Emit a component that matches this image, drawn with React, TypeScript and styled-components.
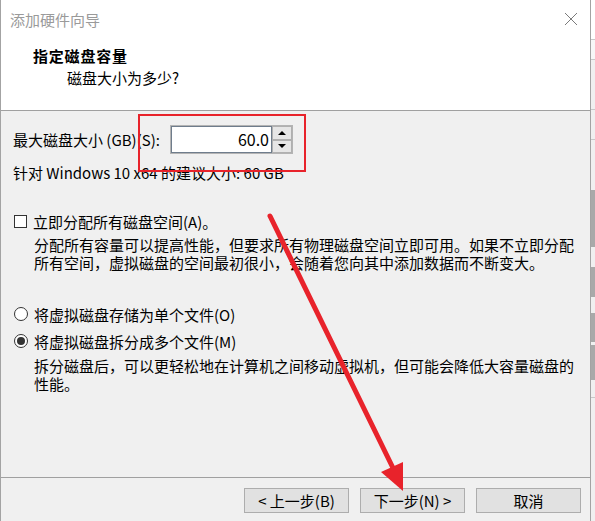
import React, { useState } from 'react';
import styled, { createGlobalStyle } from 'styled-components';

const GlobalStyle = createGlobalStyle`
    html, body {
        margin: 0;
        padding: 0;
        width: 595px;
        height: 521px;
        overflow: hidden;
        background: #f0f0f0;
    }
    * {
        box-sizing: border-box;
    }
`;

const FONT = `"Noto Sans CJK SC", "Noto Sans", sans-serif`;
const RED = '#e8232b';

const Page = styled.div`
    position: relative;
    display: flex;
    width: 595px;
    height: 521px;
    font-family: ${FONT};
    font-size: 15px;
    color: #000;
`;

const Dialog = styled.div`
    width: 591px;
    height: 521px;
    display: flex;
    flex-direction: column;
    border-left: 1px solid #a3a3a3;
    border-right: 1px solid #a3a3a3;
    background: #f0f0f0;
`;

const Header = styled.div`
    height: 111px;
    background: #fff;
    border-bottom: 1px solid #a0a0a0;
`;

const TitleBar = styled.div`
    height: 39px;
    display: flex;
    align-items: center;
    justify-content: space-between;
    padding: 0 12px 0 9px;
`;

const WindowTitle = styled.div`
    color: #9a9a9a;
    font-size: 15px;
    line-height: 20px;
`;

const CloseButton = styled.div`
    width: 14px;
    height: 14px;
    display: flex;
    align-items: center;
    justify-content: center;
    margin-top: -2px;
`;

const HeaderTitle = styled.div`
    margin: 6px 0 0 32px;
    font-weight: 700;
    letter-spacing: 0.8px;
    line-height: 22px;
`;

const HeaderSubtitle = styled.div`
    margin-left: 66px;
    line-height: 22px;
`;

const Body = styled.div`
    flex: 1;
    display: flex;
    flex-direction: column;
    padding: 14px 0 0 12px;
`;

const SizeRow = styled.div`
    display: flex;
    align-items: center;
    height: 29px;
`;

const SizeLabel = styled.div`
    width: 157px;
    line-height: 18px;
`;

const SpinBox = styled.div`
    display: flex;
    height: 29px;
    border: 1px solid #b4b4b4;
`;

const SpinInput = styled.div`
    width: 100px;
    background: #fff;
    border: 1px solid #6f7d8c;
    border-right-width: 0;
    text-align: right;
    padding-right: 2px;
    line-height: 25px;
    font-size: 16px;
`;

const SpinButtons = styled.div`
    display: flex;
    flex-direction: column;
    width: 21px;
    border-left: 1px solid #6f7d8c;
`;

const SpinButton = styled.div`
    flex: 1;
    display: flex;
    align-items: center;
    justify-content: center;
    background: #e6e6e6;
    border: 1px solid #b0b0b0;
`;

const Arrow = styled.div<{ $down?: boolean }>`
    width: 0;
    height: 0;
    border-left: 4px solid transparent;
    border-right: 4px solid transparent;
    ${({ $down }) => ($down ? 'border-top: 4px solid #000;' : 'border-bottom: 4px solid #000;')}
`;

const Line = styled.div<{ $top?: number }>`
    margin-top: ${({ $top }) => $top || 0}px;
    line-height: 18px;
`;

const OptionRow = styled.label<{ $top?: number }>`
    display: flex;
    align-items: center;
    gap: 6px;
    height: 18px;
    margin-top: ${({ $top }) => $top || 0}px;
    cursor: default;
`;

const CheckBox = styled.div`
    width: 13px;
    height: 13px;
    background: #fff;
    border: 1px solid #333;
    margin-left: 1px;
`;

const Radio = styled.div<{ $checked?: boolean }>`
    width: 14px;
    height: 14px;
    border-radius: 50%;
    background: #fff;
    border: 1px solid #333;
    display: flex;
    align-items: center;
    justify-content: center;
    margin-left: 1px;
    &::after {
        content: '';
        width: 8px;
        height: 8px;
        border-radius: 50%;
        background: ${({ $checked }) => ($checked ? '#333' : 'transparent')};
    }
`;

const Description = styled.div<{ $top?: number }>`
    margin: ${({ $top }) => $top || 0}px 0 0 21px;
    line-height: 18px;
`;

const Footer = styled.div`
    height: 44px;
    border-top: 1px solid #a0a0a0;
    display: flex;
    justify-content: flex-end;
    align-items: flex-start;
    gap: 11px;
    padding: 10px 9px 0 0;
`;

const WizardButton = styled.button`
    width: 105px;
    height: 25px;
    padding: 0;
    background: #e1e1e1;
    border: 1px solid #adadad;
    font-family: ${FONT};
    font-size: 15px;
    color: #000;
    line-height: 21px;
`;

const Backdrop = styled.div`
    width: 4px;
    display: flex;
    flex-direction: column;
    background: #f0f0f0;
`;

const BackdropPiece = styled.div<{ $h: number; $c: string; $line?: boolean }>`
    height: ${({ $h }) => $h}px;
    background: ${({ $c }) => $c};
    border-bottom: ${({ $line }) => ($line ? '1px solid #c8c8c8' : 'none')};
`;

const Annotation = styled.svg`
    position: absolute;
    left: 0;
    top: 0;
    pointer-events: none;
`;

const backdrop = [
    { h: 40, c: '#ffffff', line: true },
    { h: 20, c: '#f7f7f7', line: true },
    { h: 50, c: '#f0f0f0', line: true },
    { h: 30, c: '#f0f0f0', line: true },
    { h: 50, c: '#f0f0f0' },
    { h: 57, c: '#a9a9a9' },
    { h: 20, c: '#f0f0f0' },
    { h: 30, c: '#a9a9a9' },
    { h: 16, c: '#f0f0f0' },
    { h: 29, c: '#a9a9a9' },
    { h: 3, c: '#f0f0f0' },
    { h: 35, c: '#a9a9a9' },
    { h: 18, c: '#f0f0f0', line: true },
    { h: 123, c: '#f0f0f0' },
];

export default function App() {
    const [split, setSplit] = useState(true);
    const [allocate, setAllocate] = useState(false);

    return (
        <Page>
            <GlobalStyle />
            <Dialog>
                <Header>
                    <TitleBar>
                        <WindowTitle>添加硬件向导</WindowTitle>
                        <CloseButton>
                            <svg width="14" height="14" viewBox="0 0 14 14">
                                <path d="M1 1 L13 13 M13 1 L1 13" stroke="#7a7a7a" strokeWidth="1" fill="none" />
                            </svg>
                        </CloseButton>
                    </TitleBar>
                    <HeaderTitle>指定磁盘容量</HeaderTitle>
                    <HeaderSubtitle>磁盘大小为多少?</HeaderSubtitle>
                </Header>

                <Body>
                    <SizeRow>
                        <SizeLabel>最大磁盘大小 (GB)(S):</SizeLabel>
                        <SpinBox>
                            <SpinInput>60.0</SpinInput>
                            <SpinButtons>
                                <SpinButton>
                                    <Arrow />
                                </SpinButton>
                                <SpinButton>
                                    <Arrow $down />
                                </SpinButton>
                            </SpinButtons>
                        </SpinBox>
                    </SizeRow>
                    <Line $top={10}>针对 Windows 10 x64 的建议大小: 60 GB</Line>

                    <OptionRow $top={30} onClick={() => setAllocate(!allocate)}>
                        <CheckBox />
                        <span>立即分配所有磁盘空间(A)。</span>
                    </OptionRow>
                    <Description $top={6}>
                        分配所有容量可以提高性能，但要求所有物理磁盘空间立即可用。如果不立即分配
                        <br />
                        所有空间，虚拟磁盘的空间最初很小，会随着您向其中添加数据而不断变大。
                    </Description>

                    <OptionRow $top={33} onClick={() => setSplit(false)}>
                        <Radio $checked={!split} />
                        <span>将虚拟磁盘存储为单个文件(O)</span>
                    </OptionRow>
                    <OptionRow $top={9} onClick={() => setSplit(true)}>
                        <Radio $checked={split} />
                        <span>将虚拟磁盘拆分成多个文件(M)</span>
                    </OptionRow>
                    <Description $top={7}>
                        拆分磁盘后，可以更轻松地在计算机之间移动虚拟机，但可能会降低大容量磁盘的
                        <br />
                        性能。
                    </Description>
                </Body>

                <Footer>
                    <WizardButton>&lt; 上一步(B)</WizardButton>
                    <WizardButton>下一步(N) &gt;</WizardButton>
                    <WizardButton>取消</WizardButton>
                </Footer>
            </Dialog>

            <Backdrop>
                {backdrop.map((p, i) => (
                    <BackdropPiece key={i} $h={p.h} $c={p.c} $line={p.line} />
                ))}
            </Backdrop>

            {/* red markup drawn over the screenshot */}
            <Annotation width="595" height="521" viewBox="0 0 595 521">
                <rect x="139" y="115" width="166" height="56" fill="none" stroke={RED} strokeWidth="2" />
                <line x1="270" y1="216" x2="393" y2="468" stroke={RED} strokeWidth="5" strokeLinecap="round" />
                <polygon points="403,491 403,462 381,472" fill={RED} />
            </Annotation>
        </Page>
    );
}
